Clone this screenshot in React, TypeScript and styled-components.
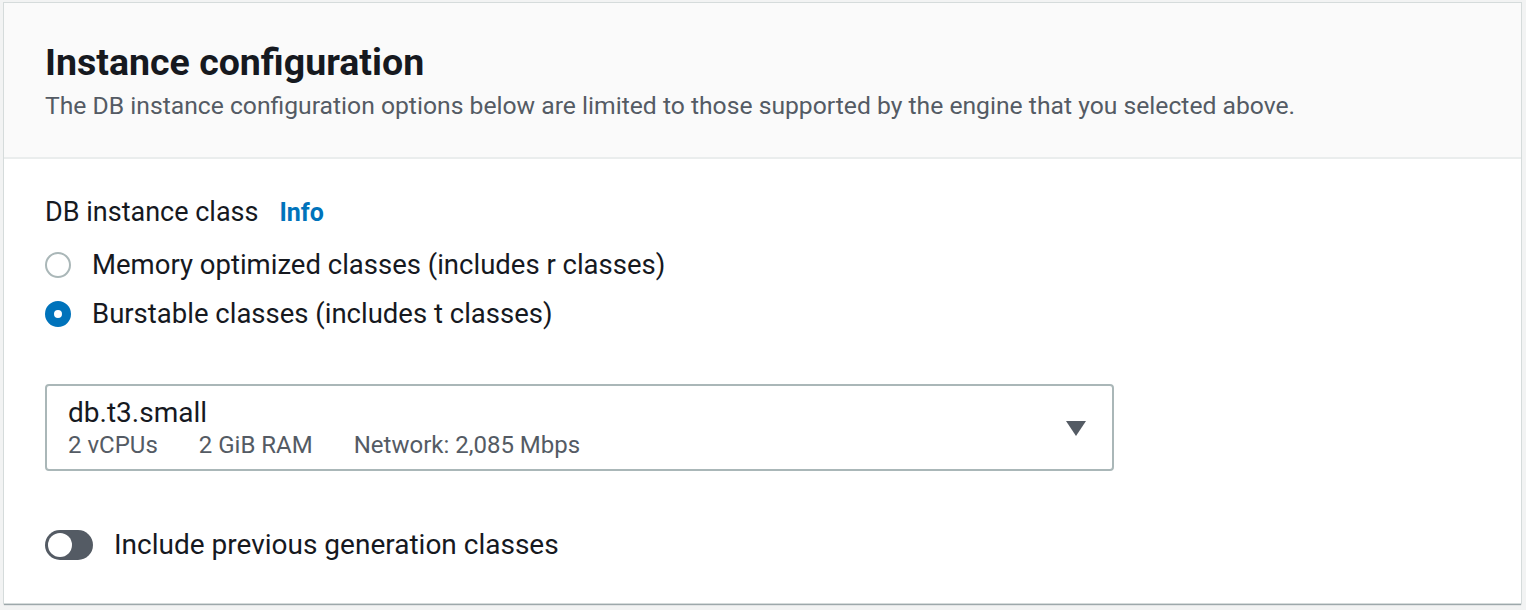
import React, { useState } from 'react'
import styled, { createGlobalStyle } from 'styled-components'

const GlobalStyle = createGlobalStyle`
  body {
    margin: 0;
    background-color: #f2f3f3;
    font-family: Roboto, 'Liberation Sans', sans-serif;
    color: #16191f;
  }
`

const Page = styled.div`
  padding: 2px 4px 6px 3px;
`

const Container = styled.div`
  background-color: #ffffff;
  border: 1px solid #d5dbdb;
  box-shadow: 0 2px 1px -1px rgba(0, 28, 36, 0.35);
`

const Header = styled.div`
  background-color: #fafafa;
  border-bottom: 2px solid #eaeded;
  padding: 37px 41px 35px;
`

const Title = styled.h2`
  margin: 0;
  font-size: 37.5px;
  line-height: 44px;
  font-weight: 700;
  color: #16191f;
`

const Description = styled.p`
  margin: 6px 0 0;
  font-size: 24.7px;
  line-height: 32px;
  color: #545b64;
`

const Body = styled.div`
  padding: 37px 41px 42px;
`

const FieldLabel = styled.div`
  display: flex;
  align-items: baseline;
  gap: 21px;
  font-size: 27px;
  line-height: 32px;
`

const InfoLink = styled.a`
  color: #0073bb;
  font-weight: 700;
  font-size: 25px;
  text-decoration: none;
  cursor: pointer;
`

const RadioGroup = styled.div`
  margin-top: 11px;
  display: flex;
  flex-direction: column;
`

const RadioRow = styled.label`
  display: flex;
  align-items: center;
  gap: 21px;
  height: 49px;
  font-size: 27.5px;
  cursor: pointer;
`

const RadioDot = styled.span<{ $checked: boolean }>`
  width: 26px;
  height: 26px;
  box-sizing: border-box;
  border-radius: 50%;
  flex-shrink: 0;
  border: ${(p) => (p.$checked ? '9px solid #0073bb' : '2px solid #aab7b8')};
  background-color: #ffffff;
`

const Select = styled.div`
  margin-top: 46px;
  width: 1069px;
  height: 87px;
  box-sizing: border-box;
  border: 2px solid #aab7b8;
  border-radius: 4px;
  display: flex;
  align-items: center;
  justify-content: space-between;
  padding: 0 26px 0 21px;
  cursor: pointer;
`

const SelectText = styled.div`
  display: flex;
  flex-direction: column;
`

const SelectValue = styled.div`
  font-size: 28px;
  line-height: 34px;
  color: #16191f;
`

const SelectMeta = styled.div`
  display: flex;
  gap: 41px;
  font-size: 24px;
  line-height: 30px;
  color: #545b64;
`

const Caret = styled.span`
  width: 0;
  height: 0;
  border-left: 10px solid transparent;
  border-right: 10px solid transparent;
  border-top: 15px solid #545b64;
  margin-top: 2px;
`

const ToggleRow = styled.label`
  margin-top: 58px;
  display: flex;
  align-items: center;
  gap: 21px;
  font-size: 28px;
  line-height: 32px;
  cursor: pointer;
`

const Track = styled.span<{ $on: boolean }>`
  width: 48px;
  height: 30px;
  border-radius: 15px;
  background-color: ${(p) => (p.$on ? '#0073bb' : '#545b64')};
  display: flex;
  align-items: center;
  justify-content: ${(p) => (p.$on ? 'flex-end' : 'flex-start')};
  padding: 0 3px;
  box-sizing: border-box;
`

const Knob = styled.span`
  width: 24px;
  height: 24px;
  border-radius: 50%;
  background-color: #ffffff;
`

const App = () => {
  const [cls, setCls] = useState('burstable')
  const [prev, setPrev] = useState(false)

  return (
    <>
      <GlobalStyle />
      <Page>
        <Container>
          <Header>
            <Title>Instance configuration</Title>
            <Description>
              The DB instance configuration options below are limited to those
              supported by the engine that you selected above.
            </Description>
          </Header>
          <Body>
            <FieldLabel>
              DB instance class <InfoLink>Info</InfoLink>
            </FieldLabel>
            <RadioGroup>
              <RadioRow onClick={() => setCls('memory')}>
                <RadioDot $checked={cls === 'memory'} />
                Memory optimized classes (includes r classes)
              </RadioRow>
              <RadioRow onClick={() => setCls('burstable')}>
                <RadioDot $checked={cls === 'burstable'} />
                Burstable classes (includes t classes)
              </RadioRow>
            </RadioGroup>
            <Select>
              <SelectText>
                <SelectValue>db.t3.small</SelectValue>
                <SelectMeta>
                  <span>2 vCPUs</span>
                  <span>2 GiB RAM</span>
                  <span>Network: 2,085 Mbps</span>
                </SelectMeta>
              </SelectText>
              <Caret />
            </Select>
            <ToggleRow onClick={() => setPrev(!prev)}>
              <Track $on={prev}>
                <Knob />
              </Track>
              Include previous generation classes
            </ToggleRow>
          </Body>
        </Container>
      </Page>
    </>
  )
}

export default App
